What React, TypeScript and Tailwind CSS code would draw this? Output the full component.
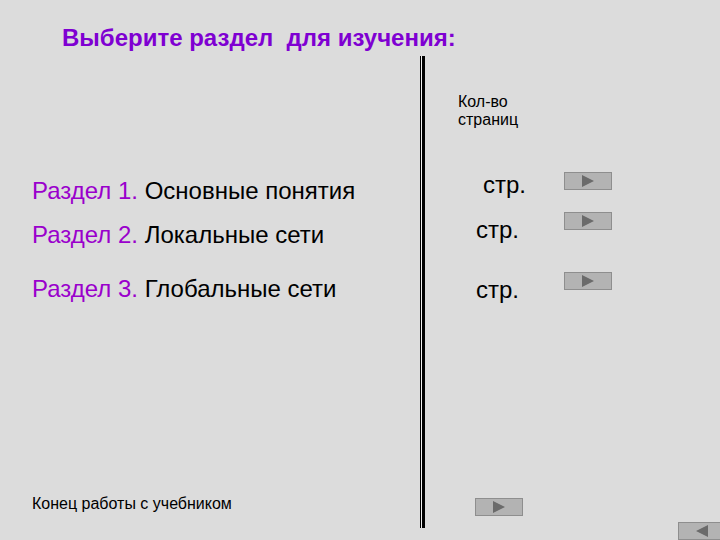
const Arrow = ({ dir = 'right' }: { dir?: 'right' | 'left' }) => (
  <svg width="14" height="12" viewBox="0 0 14 12" className="block">
    {dir === 'right' ? (
      <polygon points="1,0 13,6 1,12" fill="#6b6b6b" />
    ) : (
      <polygon points="13,0 1,6 13,12" fill="#6b6b6b" />
    )}
  </svg>
);

const NavButton = ({ dir = 'right' }: { dir?: 'right' | 'left' }) => (
  <button className="flex items-center justify-center w-[48px] h-[18px] bg-[#b3b3b3] border border-[#8e8e8e]">
    <Arrow dir={dir} />
  </button>
);

const sections = [
  { num: 'Раздел 1.', name: 'Основные понятия', gap: 'mt-0' },
  { num: 'Раздел 2.', name: 'Локальные сети', gap: 'mt-[16px]' },
  { num: 'Раздел 3.', name: 'Глобальные сети', gap: 'mt-[26px]' },
];

export default function App() {
  return (
    <div className="relative w-[720px] h-[540px] overflow-hidden bg-[#dcdcdc] font-['Liberation_Sans',Arial,sans-serif] text-black">
      {/* Title */}
      <h1 className="h-[56px] pt-[24px] pl-[62px] text-[24px] leading-[28px] font-bold text-[#7f00d2] whitespace-nowrap">
        Выберите раздел&nbsp; для изучения:
      </h1>

      <div className="flex h-[472px]">
        {/* Left column: sections */}
        <div className="flex flex-col w-[420px] pl-[32px] pt-[121px] pb-[15px]">
          {sections.map((s) => (
            <div key={s.num} className={`${s.gap} text-[24px] leading-[28px] whitespace-nowrap`}>
              <span className="text-[#9a00cc]">{s.num}</span> {s.name}
            </div>
          ))}
          <div className="mt-auto text-[16px] leading-[18px] whitespace-nowrap">Конец работы с учебником</div>
        </div>

        {/* Divider */}
        <div className="flex w-[5px]">
          <div className="w-px bg-black" />
          <div className="w-px bg-[#f2f2f2]" />
          <div className="w-[3px] bg-black" />
        </div>

        {/* Right column: page counts */}
        <div className="flex flex-col flex-1">
          <div className="mt-[37px] ml-[33px] text-[16px] leading-[18px]">
            Кол-во
            <br />
            страниц
          </div>

          <div className="flex items-start mt-[42px]">
            <div className="w-[139px] pl-[58px] text-[24px] leading-[28px]">стр.</div>
            <div className="mt-[1px]">
              <NavButton />
            </div>
          </div>
          <div className="flex items-start mt-[13px]">
            <div className="w-[139px] pl-[51px] mt-[4px] text-[24px] leading-[28px]">стр.</div>
            <NavButton />
          </div>
          <div className="flex items-start mt-[28px]">
            <div className="w-[139px] pl-[51px] mt-[4px] text-[24px] leading-[28px]">стр.</div>
            <NavButton />
          </div>

          <div className="mt-[194px] ml-[50px]">
            <NavButton />
          </div>
        </div>
      </div>

      {/* Back button in the corner */}
      <div className="absolute bottom-0 right-[-6px]">
        <NavButton dir="left" />
      </div>
    </div>
  );
}
